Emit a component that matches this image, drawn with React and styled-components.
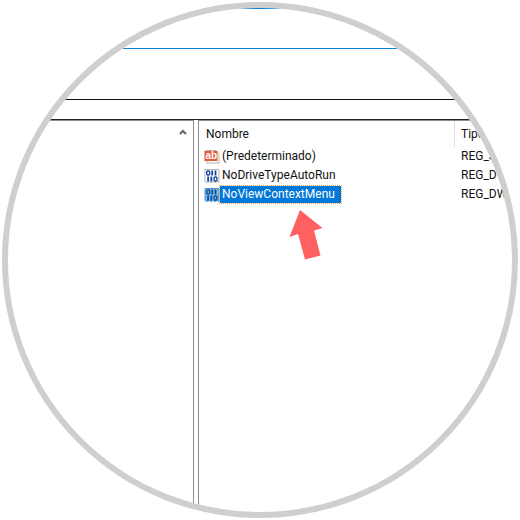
import React from "react";
import styled, { createGlobalStyle } from "styled-components";

const GlobalStyle = createGlobalStyle`
  html, body {
    margin: 0;
    padding: 0;
    background: #fff;
  }
`;

const Page = styled.div`
  width: 520px;
  height: 520px;
  display: flex;
  align-items: center;
  justify-content: center;
  background: #fff;
  font-family: Roboto, "Noto Sans", sans-serif;
`;

const Lens = styled.div`
  position: relative;
  box-sizing: border-box;
  width: 516px;
  height: 516px;
  border: 6px solid #cfcfcf;
  border-radius: 50%;
  overflow: hidden;
  display: flex;
  flex-direction: column;
  background: #fff;
`;

const Ribbon = styled.div`
  height: 39px;
  flex: none;
  border-top: 1px solid #0a84d8;
  border-bottom: 1px solid #0a84d8;
`;

const AddressGap = styled.div`
  height: 50px;
  flex: none;
  border-bottom: 1px solid #111;
`;

const AddressBar = styled.div`
  height: 19px;
  flex: none;
  border-bottom: 1px solid #222;
`;

const Panes = styled.div`
  flex: 1;
  display: flex;
  min-height: 0;
`;

const TreePane = styled.div`
  width: 186px;
  flex: none;
  box-sizing: border-box;
  border-top: 1px solid #8b8b93;
  border-right: 1px solid #8b8b93;
  display: flex;
  justify-content: flex-end;
  padding: 8px 6px 0 0;
`;

const Chevron = styled.svg`
  width: 8px;
  height: 6px;
  display: block;
`;

const ValuesPane = styled.div`
  flex: 1;
  margin-left: 4px;
  border-top: 1px solid #8b8b93;
  border-left: 1px solid #8b8b93;
`;

const HeaderRow = styled.div`
  display: flex;
  height: 26px;
`;

const HeaderCell = styled.div`
  width: ${(p) => p.$width}px;
  box-sizing: border-box;
  flex: none;
  padding: 5px 0 0 ${(p) => p.$inset}px;
  font-size: 12px;
  line-height: 16px;
  color: #111;
  border-right: ${(p) => (p.$divider ? "1px solid #dcdcdc" : "none")};
`;

const ValueRow = styled.div`
  display: flex;
  height: 19px;
  align-items: center;
`;

const NameCell = styled.div`
  width: 256px;
  flex: none;
  display: flex;
  align-items: center;
  padding-left: 5px;
  box-sizing: border-box;
`;

const IconBox = styled.svg`
  width: 16px;
  height: 16px;
  flex: none;
  display: block;
`;

const NameLabel = styled.span`
  font-size: 12px;
  line-height: 17px;
  padding: 0 6px 0 2px;
  white-space: nowrap;
  color: ${(p) => (p.$selected ? "#fff" : "#111")};
  background: ${(p) => (p.$selected ? "#0078d7" : "transparent")};
  outline: ${(p) => (p.$selected ? "1px dotted #e8a04c" : "none")};
`;

const TypeCell = styled.div`
  font-size: 12px;
  line-height: 17px;
  color: #111;
  padding-left: 6px;
  white-space: nowrap;
`;

const Pointer = styled.svg`
  position: absolute;
  left: 281px;
  top: 201px;
  width: 36px;
  height: 52px;
`;

function StringIcon() {
  return (
    <IconBox viewBox="0 0 16 16">
      <path d="M2 1.5h10l3 3v10l-2-1-2 1-2-1-2 1-2-1-2 1z" fill="#fff" stroke="#b5b5b5" />
      <rect x="0.5" y="2" width="13" height="10" fill="#e8593a" />
      <text x="1.4" y="10.2" fontSize="10" fontWeight="700" fontFamily="Liberation Sans, sans-serif" fill="#fff">
        ab
      </text>
    </IconBox>
  );
}

function BinaryIcon({ selected }) {
  const ink = selected ? "#0a4f96" : "#14479a";
  return (
    <IconBox viewBox="0 0 16 16">
      <path
        d="M1 1.5h14v13l-2-1-2 1-2-1-2 1-2-1-2 1-2-1z"
        fill={selected ? "#7cb8ea" : "#fff"}
        stroke={selected ? "#4f94d4" : "#b5b5b5"}
      />
      <rect x="2.7" y="3" width="3" height="4" rx="1.2" fill="none" stroke={ink} strokeWidth="1.4" />
      <rect x="7.3" y="2.5" width="1.8" height="5" fill={ink} />
      <rect x="10.6" y="2.5" width="1.8" height="5" fill={ink} />
      <rect x="3.2" y="8.5" width="1.8" height="5" fill={ink} />
      <rect x="6.4" y="8.5" width="1.8" height="5" fill={ink} />
      <rect x="10" y="9" width="3" height="4" rx="1.2" fill="none" stroke={ink} strokeWidth="1.4" />
    </IconBox>
  );
}

const values = [
  { name: "(Predeterminado)", type: "REG_SZ", kind: "string" },
  { name: "NoDriveTypeAutoRun", type: "REG_DWORD", kind: "binary" },
  { name: "NoViewContextMenu", type: "REG_DWORD", kind: "binary", selected: true },
];

export default function App() {
  return (
    <>
      <GlobalStyle />
      <Page>
        <Lens>
          <Ribbon />
          <AddressGap />
          <AddressBar />
          <Panes>
            <TreePane>
              <Chevron viewBox="0 0 8 6">
                <path d="M1 5l3-3 3 3" fill="none" stroke="#666" strokeWidth="2" />
              </Chevron>
            </TreePane>
            <ValuesPane>
              <HeaderRow>
                <HeaderCell $width={256} $inset={7} $divider>
                  Nombre
                </HeaderCell>
                <HeaderCell $width={100} $inset={6}>
                  Tipo
                </HeaderCell>
              </HeaderRow>
              {values.map((v) => (
                <ValueRow key={v.name}>
                  <NameCell>
                    {v.kind === "string" ? <StringIcon /> : <BinaryIcon selected={v.selected} />}
                    <NameLabel $selected={v.selected}>{v.name}</NameLabel>
                  </NameCell>
                  <TypeCell>{v.type}</TypeCell>
                </ValueRow>
              ))}
            </ValuesPane>
          </Panes>
          <Pointer viewBox="0 0 36 52">
            <path d="M11 1L33.5 19 25 21.5 31.5 46.5 16 50.5 9 25 0.5 28z" fill="#ff6161" />
          </Pointer>
        </Lens>
      </Page>
    </>
  );
}
